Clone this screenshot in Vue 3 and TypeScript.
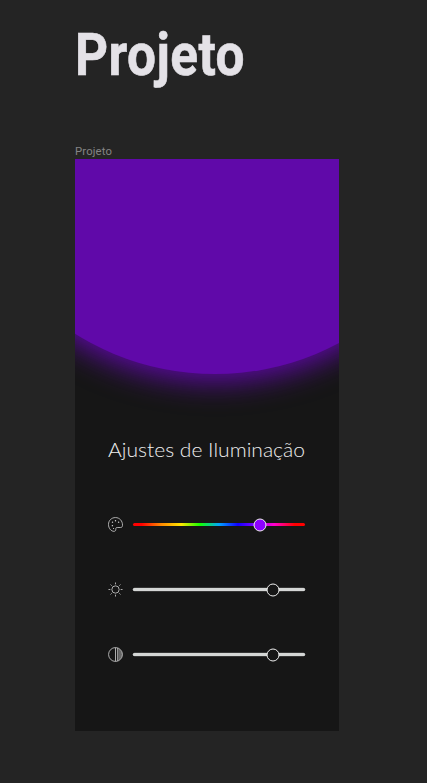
<script setup lang="ts">
interface Slider {
  id: string
  value: number
  hue?: boolean
}

const sliders: Slider[] = [
  { id: 'palette', value: 73.8, hue: true },
  { id: 'brightness', value: 81.6 },
  { id: 'contrast', value: 81.6 },
]
</script>

<template>
  <main class="page">
    <h1 class="title">
      <svg width="190" height="95" viewBox="0 0 190 95">
        <text x="0" y="74.8" textLength="170" lengthAdjust="spacingAndGlyphs">Projeto</text>
      </svg>
    </h1>
    <p class="label">Projeto</p>
    <section class="frame">
      <div class="lamp"><div class="glow"></div></div>
      <h2 class="heading">
        <svg width="200" height="32" viewBox="0 0 200 32">
          <text x="0" y="22" textLength="197" lengthAdjust="spacingAndGlyphs">Ajustes de Iluminação</text>
        </svg>
      </h2>
      <div class="controls">
        <div v-for="s in sliders" :key="s.id" class="row">
          <svg class="icon" viewBox="0 0 16 16">
            <template v-if="s.id === 'palette'">
              <path d="M8 .6C3.7.6.5 3.8.5 8c0 3.9 2.8 7.3 5.8 7.3 1.3 0 2-.8 2-1.9V12.6c0-1 .6-1.4 1.6-1.4h3.5c1.3 0 2.1-.9 2.1-2.3C15.5 4 12.3.6 8 .6z" />
              <g class="dots">
                <circle cx="8" cy="4" r=".75" />
                <circle cx="4.8" cy="5.5" r=".75" />
                <circle cx="11.3" cy="5.5" r=".75" />
                <circle cx="4.7" cy="9.2" r=".75" />
                <circle cx="5.9" cy="12.3" r=".6" />
              </g>
            </template>
            <template v-else-if="s.id === 'brightness'">
              <circle cx="8" cy="8" r="3.9" />
              <path d="M8 .5v2M8 13.5v2M.5 8h2M13.5 8h2M2.7 2.7l1.2 1.2M12.1 12.1l1.2 1.2M2.7 13.3l1.2-1.2M12.1 3.9l1.2-1.2" />
            </template>
            <template v-else>
              <path class="shade" d="M11 1.6C16.7 4.5 16.7 11.5 11 14.4z" />
              <circle cx="8" cy="8" r="7.4" />
              <path d="M8 .8v14.4M10.3 1.2v13.6" />
            </template>
          </svg>
          <div class="track" :class="{ hue: s.hue }">
            <span class="thumb" :style="{ left: s.value + '%' }"></span>
          </div>
        </div>
      </div>
    </section>
  </main>
</template>

<style>
body {
  background: #242424;
}
</style>

<style scoped>
.page {
  box-sizing: border-box;
  height: 783px;
  padding: 0 0 0 75px;
  background: #242424;
  overflow: hidden;
}
.title {
  margin: 0;
  height: 144px;
}
.title svg,
.heading svg {
  display: block;
  overflow: visible;
}
.title text {
  font: 700 58.5px Roboto, sans-serif;
  letter-spacing: 0.5px;
  fill: #e4e2e7;
  stroke: #e4e2e7;
  stroke-width: 0.6px;
}
.label {
  margin: 0;
  height: 15px;
  font: 11.3px/15px Roboto, sans-serif;
  letter-spacing: 0.15px;
  color: #858585;
}
.frame {
  width: 264px;
  height: 572px;
  background: #161616;
  overflow: hidden;
}
.lamp {
  height: 275px;
  overflow: hidden;
}
.glow {
  width: 528px;
  height: 528px;
  margin: -313px 0 0 -124px;
  border-radius: 50%;
  background: #6009a9;
  box-shadow: 0 4px 30px 3px #6009a9;
}
.heading {
  margin: 0;
  height: 75px;
  padding: 1px 0 0 33px;
  box-sizing: border-box;
}
.heading text {
  font: 300 20px Lato, sans-serif;
  fill: #eee;
}
.controls {
  display: flex;
  flex-direction: column;
  gap: 50px;
  padding: 8px 34px 0 33px;
}
.row {
  display: flex;
  align-items: center;
  height: 15px;
  gap: 9.5px;
}
.icon {
  flex: none;
  width: 15px;
  height: 15px;
  fill: none;
  stroke: #ddd;
  stroke-width: 0.8;
}
.dots {
  fill: #ddd;
  stroke: none;
}
.shade {
  fill: #666;
  stroke: none;
}
.track {
  position: relative;
  flex: 1;
  height: 3px;
  border-radius: 2px;
  background: #d4d6d5;
  box-shadow: 0 0 0 0.3px #8f9090;
}
.hue {
  background: linear-gradient(90deg, #f00 0%, #f00 5%, #ff8500 16%, #ffe600 28%, #1f0 39%, #00a5ff 50%, #1000ff 61%, #8c00ff 72%, #f0c 82%, #f00 94%);
  box-shadow: none;
}
.thumb {
  position: absolute;
  top: 50%;
  box-sizing: border-box;
  width: 13px;
  height: 13px;
  border: 1px solid #eee;
  border-radius: 50%;
  background: #161616;
  transform: translate(-50%, -50%);
}
.hue .thumb {
  background: #8c00ff;
}
</style>
